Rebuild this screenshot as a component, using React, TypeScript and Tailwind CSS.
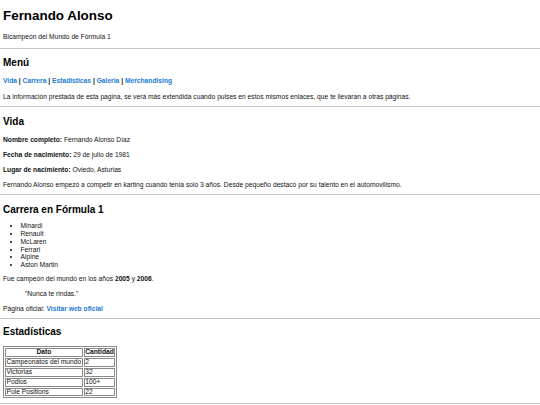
import React from "react";

const rows: [string, string][] = [
  ["Campeonatos del mundo", "2"],
  ["Victorias", "32"],
  ["Podios", "100+"],
  ["Pole Positions", "22"],
];

const teams = ["Minardi", "Renault", "McLaren", "Ferrari", "Alpine", "Aston Martin"];

function Hr() {
  return <div className="h-px w-full shrink-0 bg-[#c4c4c4]" />;
}

export default function App() {
  return (
    <div className="flex h-[405px] w-[540px] flex-col overflow-hidden bg-white font-['Liberation_Sans',Arial,sans-serif] text-[6.7px] leading-[7.8px] text-[#111]">
      <header className="flex flex-col px-[3px]">
        <h1 className="mt-[8px] text-[13.4px] font-bold leading-[15.4px] text-black">Fernando Alonso</h1>
        <p className="mt-[9.7px] mb-[7.1px]">Bicampeón del Mundo de Fórmula 1</p>
      </header>
      <Hr />
      <section className="flex flex-col px-[3px]">
        <h2 className="mt-[8.2px] text-[10px] font-bold leading-[11.5px] text-black">Menú</h2>
        <nav className="mt-[8.3px] font-bold">
          <a className="text-[#1a7ad4]">Vida</a> | <a className="text-[#1a7ad4]">Carrera</a> |{" "}
          <a className="text-[#1a7ad4]">Estadisticas</a> | <a className="text-[#1a7ad4]">Galeria</a> |{" "}
          <a className="text-[#1a7ad4]">Merchandising</a>
        </nav>
        <p className="mt-[8.2px] mb-[5.6px]">
          La información prestada de esta pagina, se verá más extendida cuando pulses en estos mismos enlaces, que te llevaran a otras páginas.
        </p>
      </section>
      <Hr />
      <section className="flex flex-col px-[3px]">
        <h2 className="mt-[8.4px] text-[10px] font-bold leading-[11.5px] text-black">Vida</h2>
        <p className="mt-[8.3px]">
          <b>Nombre completo:</b> Fernando Alonso Díaz
        </p>
        <p className="mt-[7.5px]">
          <b>Fecha de nacimiento:</b> 29 de julio de 1981
        </p>
        <p className="mt-[7.5px]">
          <b>Lugar de nacimiento:</b> Oviedo, Asturias
        </p>
        <p className="mt-[7.3px] mb-[5.3px]">
          Fernando Alonso empezó a competir en karting cuando tenía solo 3 años. Desde pequeño destacó por su talento en el automovilismo.
        </p>
      </section>
      <Hr />
      <section className="flex flex-col px-[3px]">
        <h2 className="mt-[8.2px] text-[10px] font-bold leading-[11.5px] text-black">Carrera en Fórmula 1</h2>
        <ul className="mt-[7.3px] list-disc pl-[17.5px]">
          {teams.map((t) => (
            <li key={t}>{t}</li>
          ))}
        </ul>
        <p className="mt-[5.6px]">
          Fue campeón del mundo en los años <b>2005</b> y <b>2006</b>.
        </p>
        <blockquote className="mt-[8px] ml-[22px]">"Nunca te rindas."</blockquote>
        <p className="mt-[6.6px] mb-[5px]">
          Página oficial: <a className="font-bold text-[#1a7ad4]">Visitar web oficial</a>
        </p>
      </section>
      <Hr />
      <section className="flex flex-col px-[3px]">
        <h2 className="mt-[7.8px] text-[10px] font-bold leading-[11.5px] text-black">Estadísticas</h2>
        <table className="mt-[8.5px] mb-[4.5px] w-fit border-separate border-spacing-[1px] border border-[#8a8a8a]">
          <thead>
            <tr>
              <th className="border border-[#8a8a8a] px-[0.5px] py-0 text-center leading-[6.8px]">Dato</th>
              <th className="border border-[#8a8a8a] px-[0.5px] py-0 text-center leading-[6.8px]">Cantidad</th>
            </tr>
          </thead>
          <tbody>
            {rows.map(([a, b]) => (
              <tr key={a}>
                <td className="border border-[#8a8a8a] px-[0.5px] py-0 leading-[6.8px]">{a}</td>
                <td className="border border-[#8a8a8a] px-[0.5px] py-0 leading-[6.8px]">{b}</td>
              </tr>
            ))}
          </tbody>
        </table>
      </section>
      <Hr />
    </div>
  );
}
